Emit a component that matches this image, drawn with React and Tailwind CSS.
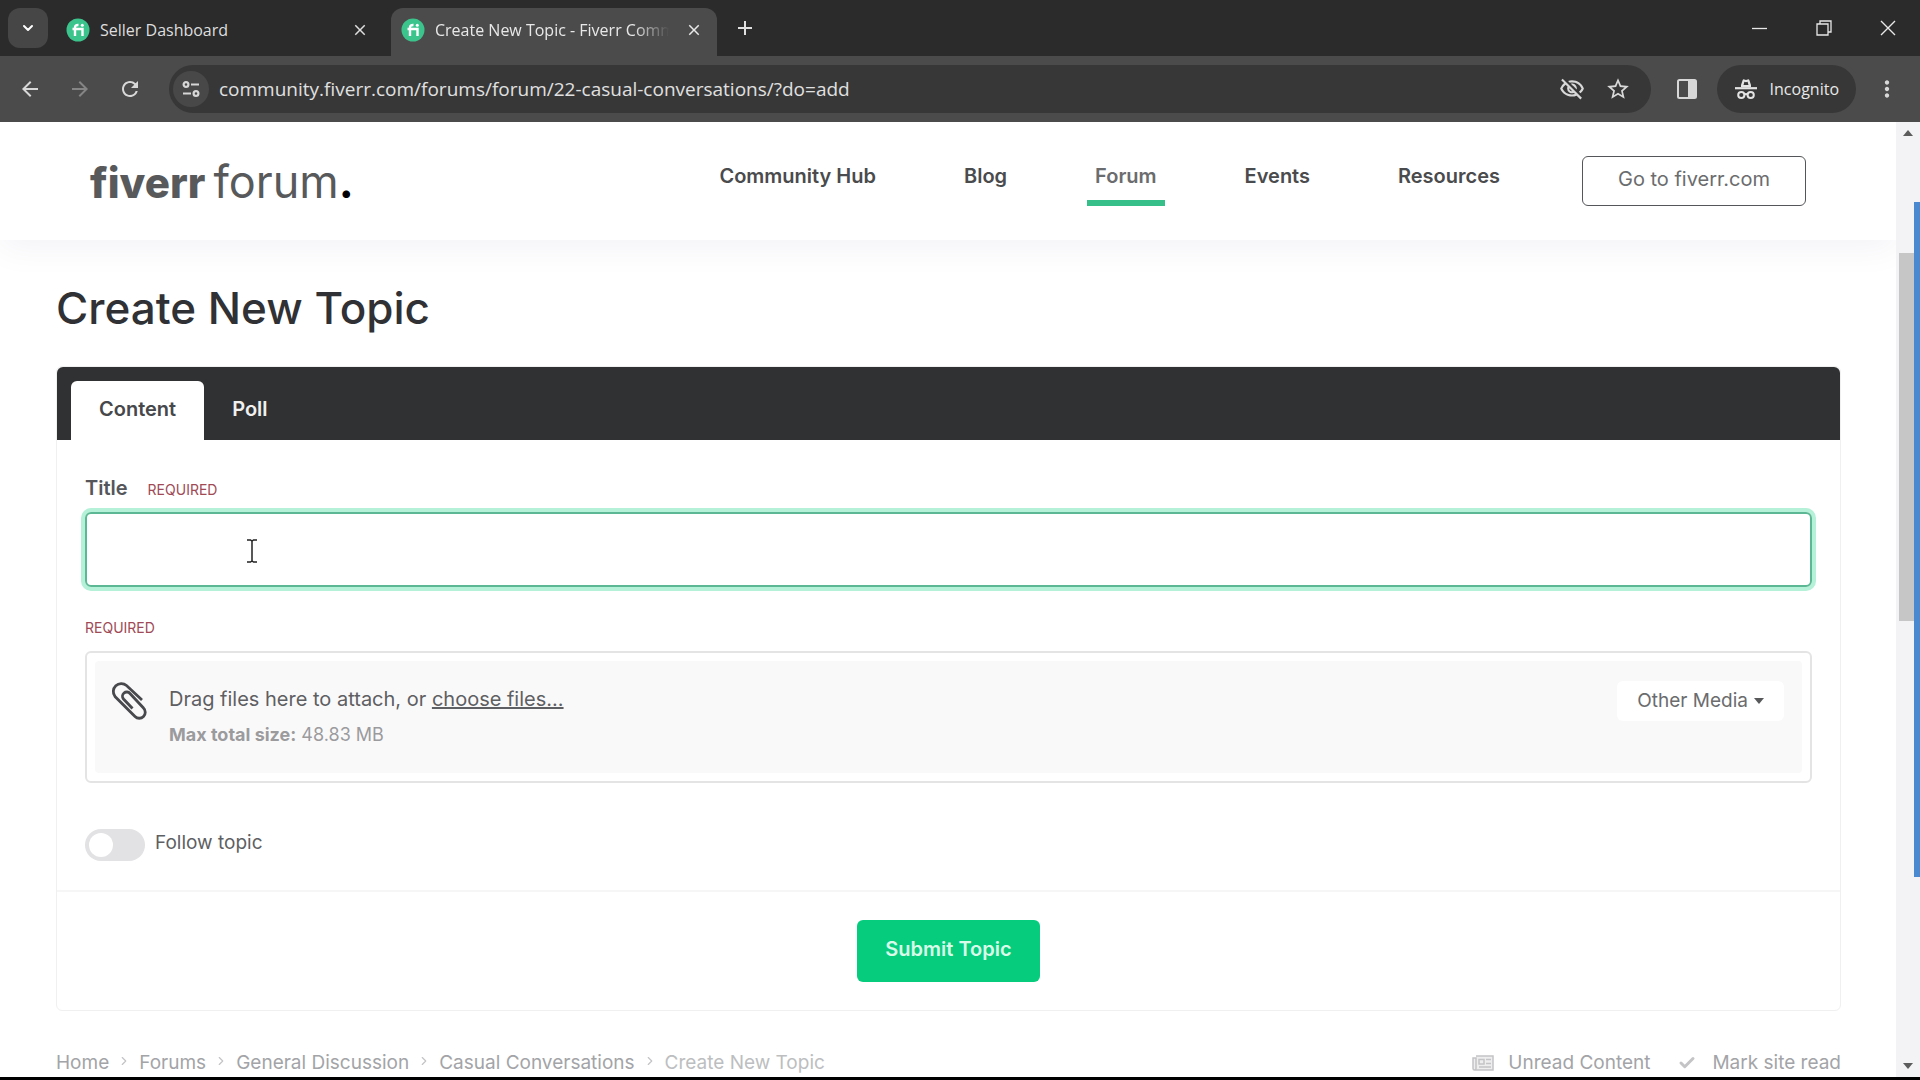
import { Check, ChevronDown, ChevronRight } from 'lucide-react';
import {
    MdAdd, MdArrowBack, MdArrowForward, MdClose, MdMoreVert,
    MdOutlineVisibilityOff, MdRefresh, MdStarBorder,
} from 'react-icons/md';

const navLinks = [
    { label: 'Community Hub' },
    { label: 'Blog' },
    { label: 'Forum', active: true },
    { label: 'Events' },
    { label: 'Resources' },
];

const breadcrumbs = ['Home', 'Forums', 'General Discussion', 'Casual Conversations'];

const Favicon = () => (
    <svg viewBox="0 0 24 24" className="size-6 shrink-0" aria-hidden="true">
        <circle cx="12" cy="12" r="11.5" fill="#3cc48d" />
        <path
            d="M9 18V10.5M6.5 11H16.5V18M9 11V9.5Q9 6.8 12.5 7"
            fill="none"
            stroke="#fff"
            strokeWidth="2.4"
        />
        <circle cx="16.3" cy="7.3" r="1.5" fill="#fff" />
    </svg>
);

const SiteInfoIcon = () => (
    <svg viewBox="0 0 20 20" className="size-5" fill="none" stroke="#d6d6d6" strokeWidth="2.2" aria-hidden="true">
        <circle cx="5" cy="5.5" r="2.4" />
        <path d="M10 5.5H18M2 14.5H10" />
        <circle cx="15" cy="14.5" r="2.4" />
    </svg>
);

const IncognitoIcon = () => (
    <svg viewBox="0 0 24 24" className="size-6" aria-hidden="true">
        <path d="M7 8 8.6 3.2Q9 2 10.3 2.4L12 3 13.7 2.4Q15 2 15.4 3.2L17 8V10H7Z" fill="#e3e3e3" />
        <path d="M9.5 8h5l-.9-3.2-1.6.5-1.6-.5Z" fill="#373737" />
        <path d="M1 11.2H23" stroke="#e3e3e3" strokeWidth="2.2" />
        <g fill="none" stroke="#e3e3e3" strokeWidth="2">
            <circle cx="7.3" cy="18" r="3.1" />
            <circle cx="16.7" cy="18" r="3.1" />
            <path d="M10.4 17.6Q12 16.6 13.6 17.6" />
        </g>
    </svg>
);

const PaperclipIcon = () => (
    <svg viewBox="0 0 36 40" className="h-10 w-9" fill="none" stroke="#48494c" strokeWidth="2.8" aria-hidden="true">
        <path d="M31 19 15.500 4.500A8 8 0 0 0 4 15.500L24 35.500A5.800 5.800 0 0 0 32.500 27L19 12.500A4.200 4.200 0 0 0 12.500 18L21.500 27.500" />
    </svg>
);

const NewspaperIcon = () => (
    <svg viewBox="0 0 22 16" className="h-4 w-[22px]" fill="none" stroke="#c4c4c6" strokeWidth="1.5" aria-hidden="true">
        <path d="M4 1H21V15H2.500A1.500 1.500 0 0 1 1 13.500V3H4V13.500A1.500 1.500 0 0 1 2.500 15" fill="#eeeeef" />
        <path d="M7 4.500H12V9H7ZM14 4.500H19M14 8.500H19M7 12H19" />
    </svg>
);

const TabStrip = () => (
    <div className="flex h-14 shrink-0 items-end bg-[#2b2b2b] pl-2">
        <button aria-label="Search tabs" className="mb-2 flex size-10 items-center justify-center rounded-xl bg-[#464646] text-white">
            <ChevronDown className="size-4" strokeWidth={3} />
        </button>
        <div className="flex h-12 w-[343px] items-center pb-1 pl-[18px] pr-[22px] text-[#dedede]">
            <Favicon />
            <span className="ml-2.5 flex-1 text-base">Seller Dashboard</span>
            <button aria-label="Close tab"><MdClose className="size-[18px]" /></button>
        </div>
        <div className="flex h-12 w-[326px] items-center rounded-t-xl bg-[#4b4b4b] pb-1 pl-2.5 pr-3.5 text-[#e8e8e8]">
            <Favicon />
            <span className="ml-2.5 mr-4 flex-1 overflow-hidden whitespace-nowrap text-base [mask-image:linear-gradient(to_right,black_85%,transparent)]">
                Create New Topic - Fiverr Community
            </span>
            <button aria-label="Close tab"><MdClose className="size-[18px]" /></button>
        </div>
        <button aria-label="New tab" className="mb-4 ml-4 text-[#e0e0e0]">
            <MdAdd className="size-6" />
        </button>
        <div className="ml-auto flex gap-12 self-center pr-6 text-[#e8e8e8]">
            <button aria-label="Minimize">
                <svg viewBox="0 0 16 16" className="size-4" stroke="currentColor" strokeWidth="1.3"><path d="M0 8.500H15" /></svg>
            </button>
            <button aria-label="Restore">
                <svg viewBox="0 0 16 16" className="size-4" fill="none" stroke="currentColor" strokeWidth="1.3">
                    <path d="M1 4H12V15H1ZM4 4V1H15V12H12" />
                </svg>
            </button>
            <button aria-label="Close">
                <svg viewBox="0 0 16 16" className="size-4" stroke="currentColor" strokeWidth="1.4"><path d="M1 1 15 15M15 1 1 15" /></svg>
            </button>
        </div>
    </div>
);

const Toolbar = () => (
    <div className="flex h-[66px] shrink-0 items-center bg-[#4b4b4b] pl-[18px] pr-5 text-[#d8d8d8]">
        <div className="flex gap-[26px]">
            <button aria-label="Back"><MdArrowBack className="size-6" /></button>
            <button aria-label="Forward" className="text-[#858585]"><MdArrowForward className="size-6" /></button>
            <button aria-label="Reload"><MdRefresh className="size-6" /></button>
        </div>
        <div className="ml-[27px] flex h-12 flex-1 items-center rounded-full bg-[#373737] pl-1 pr-5">
            <button aria-label="Site information" className="flex size-9 items-center justify-center rounded-full bg-[#484848]">
                <SiteInfoIcon />
            </button>
            <input
                aria-label="Address"
                className="ml-2.5 flex-1 bg-transparent text-[19px] text-[#e0e0e0] outline-none"
                defaultValue="community.fiverr.com/forums/forum/22-casual-conversations/?do=add"
            />
            <button aria-label="Third-party cookies blocked"><MdOutlineVisibilityOff className="size-[26px]" /></button>
            <button aria-label="Bookmark" className="ml-5"><MdStarBorder className="size-[26px]" /></button>
        </div>
        <button aria-label="Side panel" className="ml-[26px]">
            <svg viewBox="0 0 20 20" className="size-5" aria-hidden="true">
                <rect x="1" y="1" width="18" height="18" rx="1.500" fill="none" stroke="currentColor" strokeWidth="2" />
                <path d="M11 1H19V19H11Z" fill="currentColor" />
            </svg>
        </button>
        <button className="ml-5 flex h-12 items-center gap-3 rounded-full bg-[#373737] px-[17px] text-base text-[#e8e8e8]">
            <IncognitoIcon />
            Incognito
        </button>
        <button aria-label="Menu" className="ml-[18px]"><MdMoreVert className="size-[26px]" /></button>
    </div>
);

const SiteHeader = () => (
    <header className="flex h-[118px] shrink-0 items-start bg-white pl-[90px] pr-[90px] pt-[34px] text-[#4a4b4d] shadow-[0_8px_32px_#f3f2f6]">
        <a href="#" className="flex items-baseline gap-2 leading-[52px] text-[#58595b]">
            <span className="text-[42px] font-extrabold">fiverr</span>
            <span className="text-[45px]">forum<b className="text-black">.</b></span>
        </a>
        <nav className="ml-auto flex gap-[72px] text-xl font-semibold">
            {navLinks.map(link => (
                <a
                    key={link.label}
                    href="#"
                    className={link.active
                        ? 'border-b-[6px] border-[#37bf8a] px-2 pb-2.5 pt-1.5 text-[#6b6c6e]'
                        : 'px-2 pb-2.5 pt-1.5'}
                >
                    {link.label}
                </a>
            ))}
        </nav>
        <a href="#" className="ml-[74px] flex h-[50px] w-[224px] items-center justify-center rounded-md border border-[#55565a] pb-1 text-xl text-[#6b6c6e]">
            Go to fiverr.com
        </a>
    </header>
);

const Required = () => <span className="text-sm uppercase text-[#a04a55]">Required</span>;

const TopicForm = () => (
    <form className="mt-[30px] rounded-md border border-[#f0f0f1] bg-white" onSubmit={e => e.preventDefault()}>
        <div role="tablist" className="flex h-[73px] items-end rounded-t-md bg-[#303132] px-3.5 text-xl font-semibold">
            <button type="button" role="tab" aria-selected="true" className="h-[59px] rounded-t-md bg-white px-7 pb-1 text-[#47484b]">
                Content
            </button>
            <button type="button" role="tab" aria-selected="false" className="h-[59px] px-7 pb-1 text-[#f0f0f0]">
                Poll
            </button>
        </div>

        <div className="px-7 pb-7 pt-[34px]">
            <div className="flex items-baseline gap-5">
                <label htmlFor="title" className="text-xl font-semibold text-[#55565a]">Title</label>
                <Required />
            </div>
            <input
                id="title"
                type="text"
                className="mt-2.5 block h-[75px] w-full cursor-text rounded-md border-2 border-[#5cb894] px-4 text-xl outline-none ring-4 ring-[#b5f0d8]"
            />

            <div className="mt-7"><Required /></div>
            <div className="mt-3 rounded-md border-2 border-[#e4e4e5] p-2">
                <div className="flex items-start rounded-sm bg-[#faf9fa] pb-5 pl-4 pr-[18px] pt-5">
                    <PaperclipIcon />
                    <div className="ml-[22px]">
                        <p className="text-xl leading-9 text-[#5e5f62]">
                            Drag files here to attach, or <a href="#" className="underline">choose files...</a>
                        </p>
                        <p className="text-lg leading-9 text-[#9b9b9e]"><b>Max total size:</b> 48.83 MB</p>
                    </div>
                    <button type="button" className="ml-auto flex h-10 items-center gap-1.5 rounded-md bg-white px-5 text-[19px] text-[#6b6c6e]">
                        Other Media
                        <svg viewBox="0 0 10 6" className="h-[6px] w-[10px]" fill="#58595b"><path d="M0 0H10L5 6Z" /></svg>
                    </button>
                </div>
            </div>

            <label className="mt-[46px] flex w-fit items-center gap-2.5 text-[19px] text-[#5e5f62]">
                <input type="checkbox" className="peer sr-only" />
                <span className="flex h-8 w-[60px] items-center rounded-full bg-[#e2e2e4] p-1">
                    <span className="size-6 rounded-full bg-white" />
                </span>
                <span className="pb-1">Follow topic</span>
            </label>
        </div>

        <div className="flex justify-center border-t-2 border-[#f6f6f7] py-7">
            <button type="submit" className="h-[62px] rounded-md bg-[#06cc7e] px-7 pb-1 text-xl font-semibold text-[#d9fbe9]">
                Submit Topic
            </button>
        </div>
    </form>
);

const FooterBar = () => (
    <div className="mt-10 flex items-center text-[19px] leading-6 text-[#a3a4a7]">
        <nav className="flex items-center gap-2">
            {breadcrumbs.map(name => (
                <span key={name} className="flex items-center gap-2">
                    <a href="#">{name}</a>
                    <ChevronRight className="mb-1 size-3.5 text-[#c4c4c6]" />
                </span>
            ))}
            <span className="text-[#bdbec0]">Create New Topic</span>
        </nav>
        <a href="#" className="ml-auto flex items-center gap-3.5">
            <NewspaperIcon />
            Unread Content
        </a>
        <a href="#" className="ml-7 flex items-center gap-4">
            <Check className="size-[18px] text-[#c4c4c6]" strokeWidth={4} />
            Mark site read
        </a>
    </div>
);

const Scrollbar = () => (
    <div className="relative flex w-6 shrink-0 flex-col items-center justify-between bg-[#f3f2f4] py-2">
        <svg viewBox="0 0 10 6" className="h-[6px] w-[10px]" fill="#5c5c5c"><path d="M0 6H10L5 0Z" /></svg>
        <svg viewBox="0 0 10 6" className="h-[6px] w-[10px]" fill="#5c5c5c"><path d="M0 0H10L5 6Z" /></svg>
        <div className="absolute left-[3px] right-1 top-[13.7%] h-[38.5%] bg-[#c6c6c6]" />
        <div className="absolute right-0 top-[8.4%] h-[70.7%] w-[6px] bg-[#4a88cf]" />
    </div>
);

const App = () => (
    <div className="flex h-screen flex-col overflow-hidden border-b-[3px] border-black bg-white font-['Inter',sans-serif]">
        <div className="shrink-0 font-['Open_Sans',sans-serif]">
            <TabStrip />
            <Toolbar />
        </div>
        <div className="flex min-h-0 flex-1">
            <div className="relative flex min-w-0 flex-1 flex-col overflow-hidden">
                <SiteHeader />
                <main className="flex-1 pl-14 pr-[55px] pt-10">
                    <h1 className="text-[44px] font-medium leading-[56px] text-[#303134]">Create New Topic</h1>
                    <TopicForm />
                    <FooterBar />
                </main>
                <svg viewBox="0 0 12 24" className="absolute left-[246px] top-[417px] h-6 w-3" fill="none" stroke="#222" strokeWidth="1.500" aria-hidden="true">
                    <path d="M1 1H4.500L6 2 7.500 1H11M6 2V22M1 23H4.500L6 22 7.500 23H11" />
                </svg>
            </div>
            <Scrollbar />
        </div>
    </div>
);

export default App;
